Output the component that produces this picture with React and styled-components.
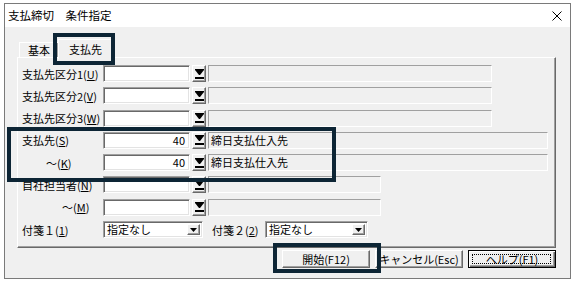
import React from 'react';
import styled, { createGlobalStyle } from 'styled-components';

const GlobalStyle = createGlobalStyle`
  html, body { margin: 0; padding: 0; background: #fff; }
  body {
    font-family: "Noto Sans CJK JP", "Noto Sans", sans-serif;
    font-size: 11px;
    color: #000;
  }
`;

const Window = styled.div`
  position: relative;
  box-sizing: border-box;
  width: 567px;
  height: 276px;
  margin: 3px 0 0 4px;
  border: 1px solid #7a7a7a;
  background: #f0f0f0;
  display: flex;
  flex-direction: column;
`;

const TitleBar = styled.div`
  height: 23px;
  flex-shrink: 0;
  background: #fff;
  display: flex;
  align-items: center;
  justify-content: space-between;
  padding: 0 8px 0 3px;
  font-size: 11.5px;
  line-height: 1;
`;

const Body = styled.div`
  flex: 1;
  padding: 12px 14px 0 12px;
`;

const TabStrip = styled.div`
  display: flex;
  align-items: flex-end;
  height: 18px;
  padding-left: 2px;
`;

const Tab = styled.div`
  box-sizing: border-box;
  position: relative;
  z-index: ${(p) => (p.$active ? 1 : 0)};
  height: ${(p) => (p.$active ? '20px' : '15px')};
  margin-bottom: ${(p) => (p.$active ? '-2px' : '0')};
  padding: ${(p) => (p.$active ? '0 10px' : '0 8px')};
  margin-left: ${(p) => (p.$active ? '-1px' : '0')};
  display: flex;
  align-items: ${(p) => (p.$active ? 'flex-start' : 'center')};
  padding-top: ${(p) => (p.$active ? '2px' : '0')};
  background: #f0f0f0;
  border-top: 1px solid #fff;
  border-left: 1px solid #fff;
  border-right: 1px solid #696969;
  box-shadow: inset -1px 0 #a0a0a0;
  line-height: 14px;
`;

const Panel = styled.div`
  box-sizing: border-box;
  height: 191px;
  border: 1px solid;
  border-color: #fff #696969 #696969 #fff;
  box-shadow: inset -1px -1px #a0a0a0;
  padding: 7px 0 0 4px;
  display: flex;
  flex-direction: column;
  gap: 5.3px;
`;

const Row = styled.div`
  display: flex;
  align-items: center;
  height: 17px;
`;

const Label = styled.div`
  box-sizing: border-box;
  width: ${(p) => p.$w || 81}px;
  padding-left: ${(p) => p.$indent || 0}px;
  margin-left: ${(p) => p.$ml || 0}px;
  white-space: nowrap;
  line-height: 14px;
  u { text-underline-offset: 1px; }
`;

const TextBox = styled.div`
  box-sizing: border-box;
  width: 87px;
  height: 17px;
  background: #fff;
  border: 1px solid;
  border-color: #a0a0a0 #fff #fff #a0a0a0;
  box-shadow: inset 1px 1px #696969, inset -1px -1px #e3e3e3;
  text-align: right;
  padding-right: 4px;
  line-height: 15px;
`;

const DropButton = styled.div`
  box-sizing: border-box;
  width: 14px;
  height: 17px;
  margin-left: 2px;
  background: #f0f0f0;
  border: 1px solid;
  border-color: #fff #696969 #696969 #fff;
  box-shadow: inset -1px -1px #a0a0a0;
  display: flex;
  align-items: center;
  justify-content: center;
`;

const Display = styled.div`
  box-sizing: border-box;
  width: ${(p) => p.$w}px;
  height: 17px;
  margin-left: 2px;
  border: 1px solid;
  border-color: #a0a0a0 #fff #fff #a0a0a0;
  padding-left: 2px;
  line-height: 15px;
  white-space: nowrap;
`;

const Select = styled.div`
  box-sizing: border-box;
  width: ${(p) => p.$w}px;
  height: 17px;
  background: #fff;
  border: 1px solid;
  border-color: #a0a0a0 #fff #fff #a0a0a0;
  box-shadow: inset 1px 1px #696969, inset -1px -1px #e3e3e3;
  display: flex;
  align-items: center;
  justify-content: space-between;
  padding: 2px 2px 2px 3px;
  line-height: 13px;
`;

const SelectArrow = styled.div`
  box-sizing: border-box;
  width: 13px;
  height: 11px;
  background: #f0f0f0;
  border: 1px solid;
  border-color: #fff #696969 #696969 #fff;
  box-shadow: inset -1px -1px #a0a0a0;
  display: flex;
  align-items: center;
  justify-content: center;
`;

const ButtonBar = styled.div`
  display: flex;
  justify-content: flex-end;
  gap: 5px;
  margin-top: 2px;
`;

const Button = styled.div`
  box-sizing: border-box;
  position: relative;
  width: 88px;
  height: 18px;
  background: #f0f0f0;
  border: 1px solid;
  border-color: ${(p) => (p.$default ? '#000' : '#fff #696969 #696969 #fff')};
  box-shadow: ${(p) =>
    p.$default
      ? 'inset 1px 1px #fff, inset -1px -1px #696969, inset -2px -2px #a0a0a0'
      : 'inset -1px -1px #a0a0a0'};
  display: flex;
  align-items: center;
  justify-content: center;
  line-height: 14px;
  white-space: nowrap;
  &::after {
    content: '';
    display: ${(p) => (p.$default ? 'block' : 'none')};
    position: absolute;
    inset: 3px 4px 3px 3px;
    border: 1px dotted #000;
  }
`;

const Highlight = styled.div`
  position: absolute;
  z-index: 5;
  left: ${(p) => p.$x}px;
  top: ${(p) => p.$y}px;
  width: ${(p) => p.$w}px;
  height: ${(p) => p.$h}px;
  box-sizing: border-box;
  border: 4px solid #0d2535;
  pointer-events: none;
`;

const CloseIcon = () => (
  <svg width="10" height="10" viewBox="0 0 10 10">
    <path d="M0.5 0.5 L9.5 9.5 M9.5 0.5 L0.5 9.5" stroke="#000" strokeWidth="1" fill="none" />
  </svg>
);

const DropIcon = () => (
  <svg width="9" height="10" viewBox="0 0 9 10">
    <polygon points="0,0 9,0 9,1 5,6 4,6 0,1" fill="#000" />
    <rect x="0" y="8" width="9" height="2" fill="#000" />
  </svg>
);

const SmallArrow = () => (
  <svg width="7" height="4" viewBox="0 0 7 4">
    <polygon points="0,0 7,0 3.5,4" fill="#000" />
  </svg>
);

const lookupRows = [
  { label: <>支払先区分1(<u>U</u>)</>, w: 284 },
  { label: <>支払先区分2(<u>V</u>)</>, w: 284 },
  { label: <>支払先区分3(<u>W</u>)</>, w: 284 },
  { label: <>支払先(<u>S</u>)</>, w: 340, value: '40', name: '締日支払仕入先' },
  { label: <>～(<u>K</u>)</>, indent: 24, w: 340, value: '40', name: '締日支払仕入先' },
  { label: <>自社担当者(<u>N</u>)</>, w: 173 },
  { label: <>～(<u>M</u>)</>, indent: 40, w: 173 },
];

export default function App() {
  return (
    <>
      <GlobalStyle />
      <Window>
        <TitleBar>
          <span>支払締切　条件指定</span>
          <CloseIcon />
        </TitleBar>
        <Body>
          <TabStrip>
            <Tab>基本</Tab>
            <Tab $active>支払先</Tab>
          </TabStrip>
          <Panel>
            {lookupRows.map((r, i) => (
              <Row key={i}>
                <Label $indent={r.indent}>{r.label}</Label>
                <TextBox>{r.value}</TextBox>
                <DropButton>
                  <DropIcon />
                </DropButton>
                <Display $w={r.w}>{r.name}</Display>
              </Row>
            ))}
            <Row>
              <Label>付箋１(<u>1</u>)</Label>
              <Select $w={100}>
                <span>指定なし</span>
                <SelectArrow>
                  <SmallArrow />
                </SelectArrow>
              </Select>
              <Label $w={53} $ml={9}>付箋２(<u>2</u>)</Label>
              <Select $w={103}>
                <span>指定なし</span>
                <SelectArrow>
                  <SmallArrow />
                </SelectArrow>
              </Select>
            </Row>
          </Panel>
          <ButtonBar>
            <Button>開始(F12)</Button>
            <Button>キャンセル(Esc)</Button>
            <Button $default>ヘルプ(F1)</Button>
          </ButtonBar>
        </Body>
        <Highlight $x={48} $y={29} $w={62} $h={32} />
        <Highlight $x={2} $y={123} $w={329} $h={55} />
        <Highlight $x={268} $y={239} $w={108} $h={30} />
      </Window>
    </>
  );
}
